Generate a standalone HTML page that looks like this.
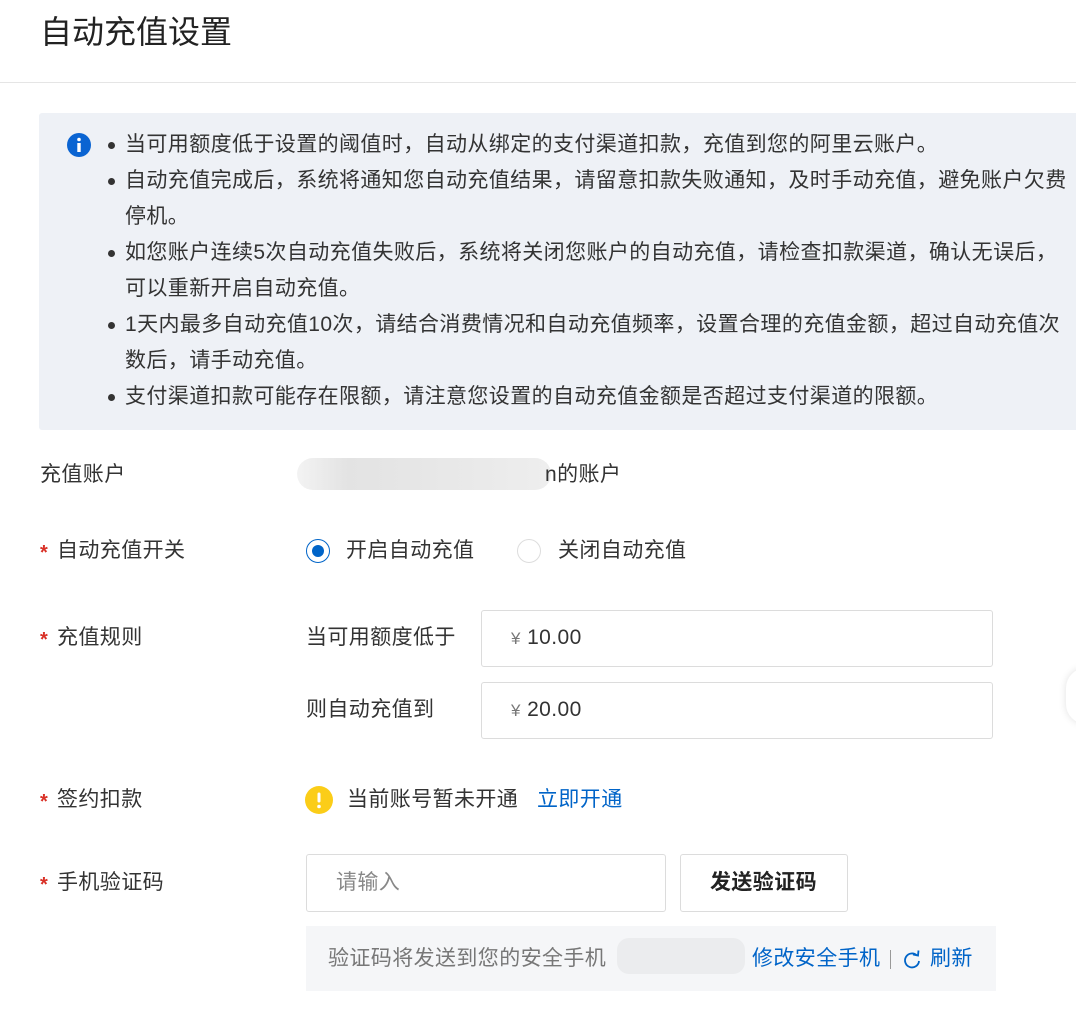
<!DOCTYPE html>
<html><head><meta charset="utf-8"><style>
*{margin:0;padding:0;box-sizing:border-box}
body{width:1076px;height:1018px;background:#fff;font-family:"Liberation Sans","Noto Sans CJK SC",sans-serif;color:#333;position:relative;overflow:hidden}
.a{position:absolute;white-space:nowrap}
.t{font-size:21px;line-height:24px;letter-spacing:0.4px}
.info{position:absolute;left:39px;top:113px;width:1040px;height:317px;background:#eef1f6;border-radius:3px}
.info ul{position:absolute;left:86px;top:14px;list-style:none;font-size:21px;letter-spacing:0.4px;line-height:36px;color:#333}
.info li{position:relative;padding-left:0}
.info li:before{content:"";position:absolute;left:-17px;top:15px;width:7px;height:7px;border-radius:50%;background:#333}
.lab{font-size:21px;line-height:24px;letter-spacing:0.4px;color:#333}
.st{position:absolute;left:0;top:2px;color:#d93026;font-size:20px;font-weight:bold}
.inp{position:absolute;border:1px solid #dcdcdc;border-radius:3px;background:#fff}
.blue{color:#0064c8}
</style></head><body>
<div class="a" style="left:40px;top:12px;font-size:32px;line-height:40px;color:#222">自动充值设置</div>
<div class="a" style="left:0;top:82px;width:1076px;height:1px;background:#e5e5e5"></div>
<div class="info">
<svg style="position:absolute;left:28px;top:20px" width="24" height="24" viewBox="0 0 24 24"><circle cx="12" cy="12" r="12" fill="#0a64d2"/><circle cx="12" cy="6.5" r="1.8" fill="#fff"/><rect x="10.3" y="10" width="3.4" height="9" fill="#fff"/></svg>
<ul>
<li>当可用额度低于设置的阈值时，自动从绑定的支付渠道扣款，充值到您的阿里云账户。</li>
<li>自动充值完成后，系统将通知您自动充值结果，请留意扣款失败通知，及时手动充值，避免账户欠费<br>停机。</li>
<li>如您账户连续5次自动充值失败后，系统将关闭您账户的自动充值，请检查扣款渠道，确认无误后，<br>可以重新开启自动充值。</li>
<li>1天内最多自动充值10次，请结合消费情况和自动充值频率，设置合理的充值金额，超过自动充值次<br>数后，请手动充值。</li>
<li>支付渠道扣款可能存在限额，请注意您设置的自动充值金额是否超过支付渠道的限额。</li>
</ul>
</div>
<div class="a lab" style="left:40px;top:463px">充值账户</div>
<div class="a" style="left:297px;top:458px;width:254px;height:32px;border-radius:16px;background:linear-gradient(90deg,#f3f3f3,#e3e3e3 20%,#e8e8e8 60%,#eeeeee)"></div>
<div class="a t" style="left:545px;top:463px">n的账户</div>

<div class="a lab" style="left:40px;top:539px;padding-left:17px"><span class="st">*</span>自动充值开关</div>
<div class="a" style="left:306px;top:539px;width:24px;height:24px;border:1px solid #0064c8;border-radius:50%"><div style="position:absolute;left:5px;top:5px;width:12px;height:12px;border-radius:50%;background:#0064c8"></div></div>
<div class="a t" style="left:346px;top:539px">开启自动充值</div>
<div class="a" style="left:517px;top:539px;width:24px;height:24px;border:1px solid #ddd;border-radius:50%"></div>
<div class="a t" style="left:558px;top:539px">关闭自动充值</div>

<div class="a lab" style="left:40px;top:626px;padding-left:17px"><span class="st">*</span>充值规则</div>
<div class="a t" style="left:306px;top:626px">当可用额度低于</div>
<div class="inp" style="left:481px;top:610px;width:512px;height:57px"></div>
<div class="a t" style="left:511px;top:626px"><span style="color:#777;font-size:17px">¥</span> 10.00</div>
<div class="a t" style="left:306px;top:698px">则自动充值到</div>
<div class="inp" style="left:481px;top:682px;width:512px;height:57px"></div>
<div class="a t" style="left:511px;top:698px"><span style="color:#777;font-size:17px">¥</span> 20.00</div>

<div class="a lab" style="left:40px;top:788px;padding-left:17px"><span class="st">*</span>签约扣款</div>
<svg class="a" style="left:305px;top:786px" width="28" height="28" viewBox="0 0 28 28"><circle cx="14" cy="14" r="14" fill="#fbcd18"/><rect x="12.5" y="6.5" width="3" height="10" rx="1.5" fill="#fff"/><circle cx="14" cy="20.5" r="1.8" fill="#fff"/></svg>
<div class="a t" style="left:347px;top:788px">当前账号暂未开通</div>
<div class="a t blue" style="left:537px;top:788px">立即开通</div>

<div class="a lab" style="left:40px;top:871px;padding-left:17px"><span class="st">*</span>手机验证码</div>
<div class="inp" style="left:306px;top:854px;width:360px;height:58px"></div>
<div class="a t" style="left:336px;top:871px;color:#888">请输入</div>
<div class="inp" style="left:680px;top:854px;width:168px;height:58px"></div>
<div class="a t" style="left:710px;top:871px;color:#222;font-weight:bold">发送验证码</div>
<div class="a" style="left:306px;top:926px;width:690px;height:65px;background:#f5f6f8"></div>
<div class="a t" style="left:328px;top:947px;color:#777">验证码将发送到您的安全手机</div>
<div class="a" style="left:617px;top:938px;width:128px;height:36px;border-radius:12px;background:#ebecee"></div>
<div class="a t blue" style="left:752px;top:947px">修改安全手机</div>
<div class="a" style="left:890px;top:950px;width:1px;height:19px;background:#999"></div>
<svg class="a" style="left:902px;top:949px" width="20" height="22" viewBox="0 0 20 22"><path d="M15 6.5A7 7 0 1 0 17 12" fill="none" stroke="#0064c8" stroke-width="1.8"/><path d="M11 5.5L16 6.5L16.5 1.5" fill="none" stroke="#0064c8" stroke-width="1.8"/></svg>
<div class="a t blue" style="left:930px;top:947px">刷新</div>
<div class="a" style="left:1066px;top:668px;width:40px;height:56px;border-radius:28px;background:#fff;box-shadow:0 0 8px rgba(0,0,0,.12)"></div>
</body></html>
